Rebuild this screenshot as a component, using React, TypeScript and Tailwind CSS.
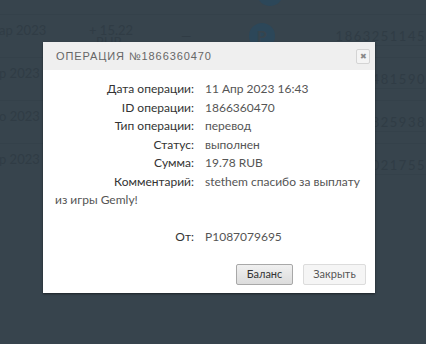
const rows: [string, string][] = [
  ["Дата операции:", "11 Апр 2023 16:43"],
  ["ID операции:", "1866360470"],
  ["Тип операции:", "перевод"],
  ["Статус:", "выполнен"],
  ["Сумма:", "19.78 RUB"],
  ["Комментарий:", "stethem спасибо за выплату из игры Gemly!"],
];

const bgRows = [
  { date: "", amount: "", id: "", circle: true },
  { date: "ар 2023", amount: "+ 15.22", id: "1863251145", circle: true },
  { date: "р 2023", amount: "", id: "1862481590", circle: false },
  { date: "о 2023", amount: "", id: "1861825938", circle: false },
  { date: "р 2023", amount: "", id: "1861021755", circle: false },
];

const Row = ({ label, value }: { label: string; value: string }) => (
  <div className="leading-[18.5px]">
    <span className="inline-block w-[139px] text-right mr-[11px] text-[#333]">{label}</span>
    <span className="text-[#555]">{value}</span>
  </div>
);

export default function App() {
  return (
    <div className="relative w-[426px] h-[344px] overflow-hidden bg-[#37444d] font-['Lato',sans-serif]">
      {/* page behind the overlay */}
      <div className="flex flex-col -mt-[29px]">
        {bgRows.map((r, i) => (
          <div key={i} className="flex items-start h-[43px] border-t border-[#34414a] text-[#303c45] text-[13px] leading-[18px]">
            <div className="w-[93px] mt-[6px] -ml-[1px]">{r.date}</div>
            <div className="w-[95px] mt-[6px] leading-[12px] pt-[3px]">
              {r.amount}
              {r.amount && <div className="pl-[7px]">RUB</div>}
            </div>
            <div className="w-[70px] mt-[12px]">{r.amount ? "—" : ""}</div>
            <div className="w-[26px] h-[26px] mt-[8px]">
              {r.circle && (
                <div className="w-[26px] h-[26px] rounded-full bg-[#2c4759] text-[#37444d] font-bold text-[16px] flex items-center justify-center">
                  {r.amount ? "P" : ""}
                </div>
              )}
            </div>
            <div className="ml-[61px] mt-[12px] tracking-[1.5px] border-b border-[#34414a]">{r.id}</div>
          </div>
        ))}
      </div>

      {/* modal */}
      <div className="absolute left-[43px] top-[42px] w-[332px] bg-white shadow-[0_1px_2px_rgba(0,0,0,0.5)] text-[12px]">
        <div className="flex items-center justify-between h-[28px] bg-[#efefef] pl-[13px] pr-[5px]">
          <span className="text-[#666] text-[11px] tracking-[0.9px] font-['Liberation_Sans',sans-serif]">
            ОПЕРАЦИЯ №1866360470
          </span>
          <button className="w-[14px] h-[15px] border border-[#d4d4d4] rounded-[2px] bg-[#f4f4f4] text-[#888] text-[8px] leading-none flex items-center justify-center">
            ✖
          </button>
        </div>
        <div className="pt-[10px] px-[12px]">
          {rows.map(([l, v]) => (
            <Row key={l} label={l} value={v} />
          ))}
          <div className="h-[18.5px]" />
          <Row label="От:" value="P1087079695" />
        </div>
        <div className="flex justify-end gap-[10px] pt-[17px] pb-[8px] pr-[9px]">
          <button className="w-[57px] h-[21px] rounded-[2px] border border-[#a8a8a8] bg-gradient-to-b from-[#f0f0f0] to-[#dcdcdc] text-[#333] text-[11px]">
            Баланс
          </button>
          <button className="w-[63px] h-[21px] rounded-[2px] border border-[#dcdcdc] bg-[#f5f5f5] text-[#555] text-[11px]">
            Закрыть
          </button>
        </div>
      </div>
    </div>
  );
}
